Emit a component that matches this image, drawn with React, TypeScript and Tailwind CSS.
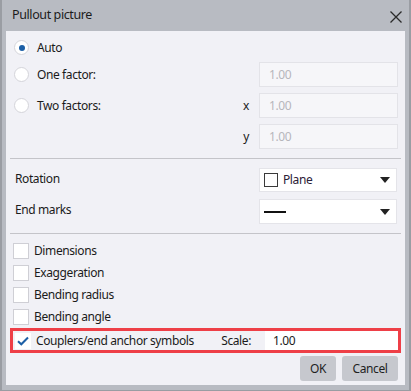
import React from "react";

const font = { fontFamily: '"Noto Sans", "Liberation Sans", sans-serif' };

function Radio({ checked }: { checked?: boolean }) {
  return (
    <span className="w-[15px] h-[15px] rounded-full bg-white border border-[#d4d4da] flex items-center justify-center shrink-0">
      {checked && <span className="w-[6px] h-[6px] rounded-full bg-[#1c5fa6]" />}
    </span>
  );
}

function Check({ checked, bare }: { checked?: boolean; bare?: boolean }) {
  return (
    <span
      className={
        "w-[16px] h-[16px] bg-white flex items-center justify-center shrink-0 " +
        (bare ? "" : "border border-[#cfcfd5]")
      }
    >
      {checked && (
        <svg width="12" height="10" viewBox="0 0 12 10">
          <path d="M1 5.2 L4.3 8.3 L11 1.5" fill="none" stroke="#1c5fa6" strokeWidth="2" />
        </svg>
      )}
    </span>
  );
}

function DisabledInput() {
  return (
    <div className="w-[139px] h-[25px] bg-[#f6f6f9] border border-[#e3e3e8] flex items-center pl-[9px] text-[#b6b6bc]">
      1.00
    </div>
  );
}

function Arrow() {
  return (
    <svg width="10" height="6" viewBox="0 0 10 6" className="ml-auto">
      <path d="M0 0 L10 0 L5 6 Z" fill="#222" />
    </svg>
  );
}

export default function App() {
  const rows = ["Dimensions", "Exaggeration", "Bending radius", "Bending angle"];
  return (
    <div
      className="w-[411px] h-[391px] bg-[#b8bbc2] border-l-2 border-r-2 border-b border-[#9a9da3] flex flex-col text-[12px] tracking-[-0.4px] text-[#1b1b1b]"
      style={font}
    >
      {/* title bar */}
      <div className="h-[31px] shrink-0 flex items-center pl-[10px] pr-[6px] text-[12.5px] text-[#1c1c1c]">
        <span>Pullout picture</span>
        <svg width="12" height="12" viewBox="0 0 12 12" className="ml-auto mr-[1px] mt-[2px]">
          <path d="M0.5 0.5 L11.5 11.5 M11.5 0.5 L0.5 11.5" stroke="#2a2a2a" strokeWidth="1.3" />
        </svg>
      </div>

      {/* body */}
      <div className="flex-1 mx-[4px] mb-[5px] bg-[#f1f1f6] flex flex-col">
        {/* scale mode */}
        <div className="pt-[4px] flex flex-col">
          <div className="h-[25px] flex items-center pl-[8px] gap-[8px]">
            <Radio checked />
            <span>Auto</span>
          </div>
          <div className="mt-[2px] h-[25px] flex items-center pl-[8px] gap-[8px]">
            <Radio />
            <span>One factor:</span>
            <span className="ml-auto mr-[7px]">
              <DisabledInput />
            </span>
          </div>
          <div className="mt-[6px] h-[25px] flex items-center pl-[8px] gap-[8px]">
            <Radio />
            <span>Two factors:</span>
            <span className="ml-auto">x</span>
            <span className="ml-[2px] mr-[7px]">
              <DisabledInput />
            </span>
          </div>
          <div className="mt-[6px] h-[25px] flex items-center gap-[8px]">
            <span className="ml-auto">y</span>
            <span className="ml-[2px] mr-[7px]">
              <DisabledInput />
            </span>
          </div>
        </div>

        <div className="mt-[9px] mx-[4px] h-px bg-[#c4c4c9]" />

        {/* rotation / end marks */}
        <div className="mt-[9px] h-[24px] flex items-center pl-[9px]">
          <span className="-mt-[2px]">Rotation</span>
          <div className="ml-auto mr-[8px] w-[138px] h-[24px] bg-white border border-[#e4e4e9] flex items-center pl-[4px] pr-[6px]">
            <span className="w-[14px] h-[14px] border-[1.5px] border-[#3a3a3a] mr-[5px]" />
            <span className="text-[#2b2036]">Plane</span>
            <Arrow />
          </div>
        </div>
        <div className="mt-[7px] h-[25px] flex items-center pl-[9px]">
          <span className="-mt-[4px]">End marks</span>
          <div className="ml-auto mr-[8px] w-[138px] h-[25px] bg-white border border-[#e4e4e9] flex items-center pl-[4px] pr-[6px]">
            <span className="w-[22px] h-[2px] bg-[#111]" />
            <Arrow />
          </div>
        </div>

        <div className="mt-[9px] mx-[4px] h-px bg-[#c4c4c9]" />

        {/* checkboxes */}
        <div className="mt-[6px] flex flex-col">
          {rows.map((r) => (
            <div key={r} className="h-[22px] flex items-center pl-[7px] gap-[5px]">
              <Check />
              <span>{r}</span>
            </div>
          ))}
          <div className="mx-[4px] h-[25px] border-[3px] border-[#ee3f47] flex items-center">
            <span className="ml-[2px]">
              <Check checked bare />
            </span>
            <span className="ml-[5px]">Couplers/end anchor symbols</span>
            <span className="ml-auto mr-[14px]">Scale:</span>
            <div className="w-[133px] h-full bg-white flex items-center pl-[8px]">1.00</div>
          </div>
        </div>

        {/* buttons */}
        <div className="mt-[3px] flex justify-end gap-[6px] pr-[7px]">
          <button className="w-[36px] h-[25px] rounded-[3px] bg-[#c6c8ce] text-[#1f1f1f]">OK</button>
          <button className="w-[56px] h-[25px] rounded-[3px] bg-[#c6c8ce] text-[#1f1f1f]">Cancel</button>
        </div>
      </div>
    </div>
  );
}
